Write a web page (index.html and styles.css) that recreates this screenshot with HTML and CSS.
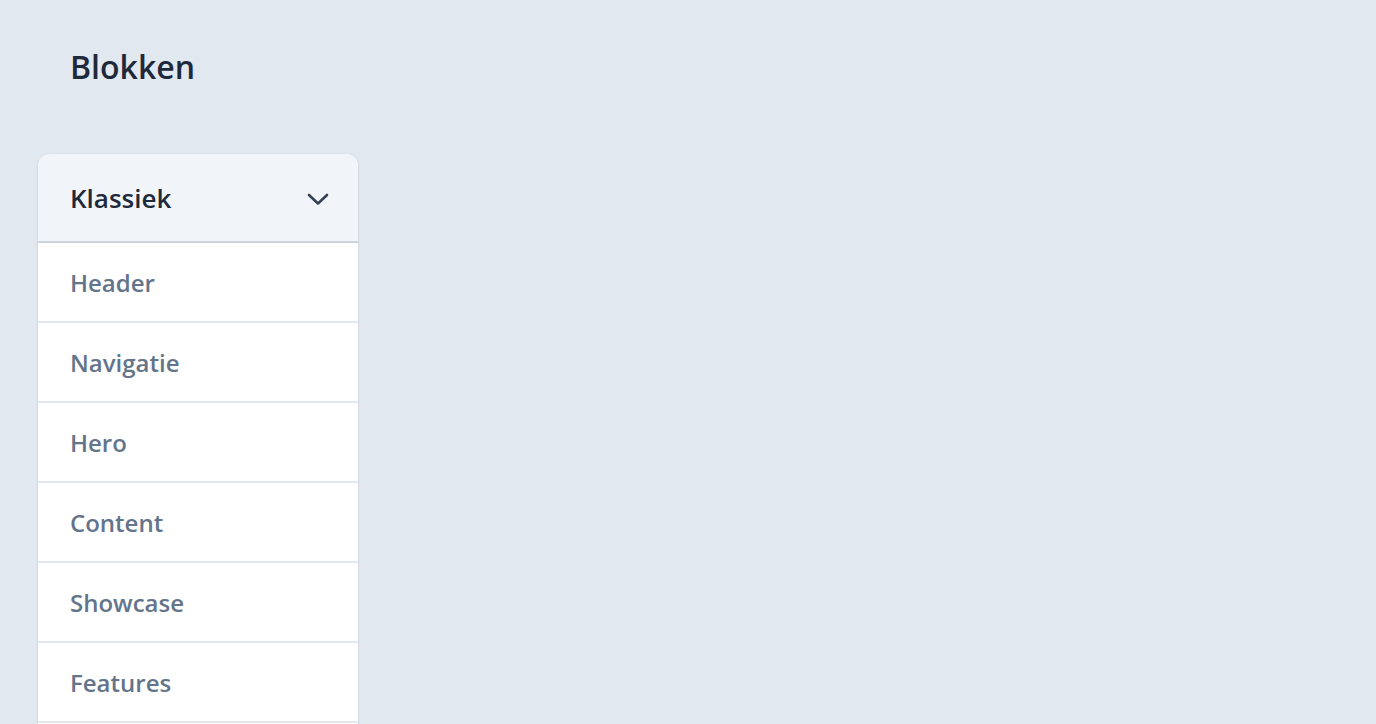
FILE: index.html
```html
<!DOCTYPE html>
<html lang="nl">
<head>
<meta charset="utf-8">
<title>Blokken</title>
<link rel="stylesheet" href="styles.css">
</head>
<body>
<main class="page">
  <h1 class="title">Blokken</h1>
  <section class="card">
    <div class="card-head">
      <span class="card-title">Klassiek</span>
      <svg class="chevron" width="22" height="13" viewBox="0 0 22 13" aria-hidden="true"><path d="M2 2 L11 10.5 L20 2" fill="none" stroke="#334155" stroke-width="2.6" stroke-linecap="round" stroke-linejoin="round"/></svg>
    </div>
    <ul class="list">
      <li class="item">Header</li>
      <li class="item">Navigatie</li>
      <li class="item">Hero</li>
      <li class="item">Content</li>
      <li class="item">Showcase</li>
      <li class="item">Features</li>
    </ul>
  </section>
</main>
</body>
</html>
```
FILE: styles.css
```css
* { box-sizing: border-box; }
html, body { margin: 0; padding: 0; }
body {
  background: #e2e8f0;
  font-family: "Open Sans", "Noto Sans", sans-serif;
  height: 724px;
  overflow: hidden;
}
.page {
  padding: 0 38px;
}
.title {
  margin: 45px 0 0;
  padding-left: 32px;
  font-size: 32px;
  line-height: 44px;
  font-weight: 600;
  color: #1e293b;
}
.card {
  margin-top: 65px;
  width: 320px;
  background: #ffffff;
  border-radius: 12px 12px 0 0;
  box-shadow: 0 1px 3px rgba(15, 23, 42, 0.12), 0 1px 2px rgba(15, 23, 42, 0.06);
  overflow: hidden;
  padding-bottom: 20px;
}
.card-head {
  height: 89px;
  background: #f1f5f9;
  border-bottom: 2px solid #cbd5e1;
  display: flex;
  align-items: center;
  justify-content: space-between;
  padding: 0 29px 0 32px;
}
.card-title {
  font-size: 26px;
  font-weight: 600;
  color: #1e293b;
}
.chevron { display: block; margin-top: 3px; }
.list {
  list-style: none;
  margin: 0;
  padding: 0;
}
.item {
  height: 80px;
  border-bottom: 2px solid #e2e8f0;
  display: flex;
  align-items: center;
  padding: 0 32px;
  font-size: 24px;
  font-weight: 600;
  color: #64748b;
}
```
